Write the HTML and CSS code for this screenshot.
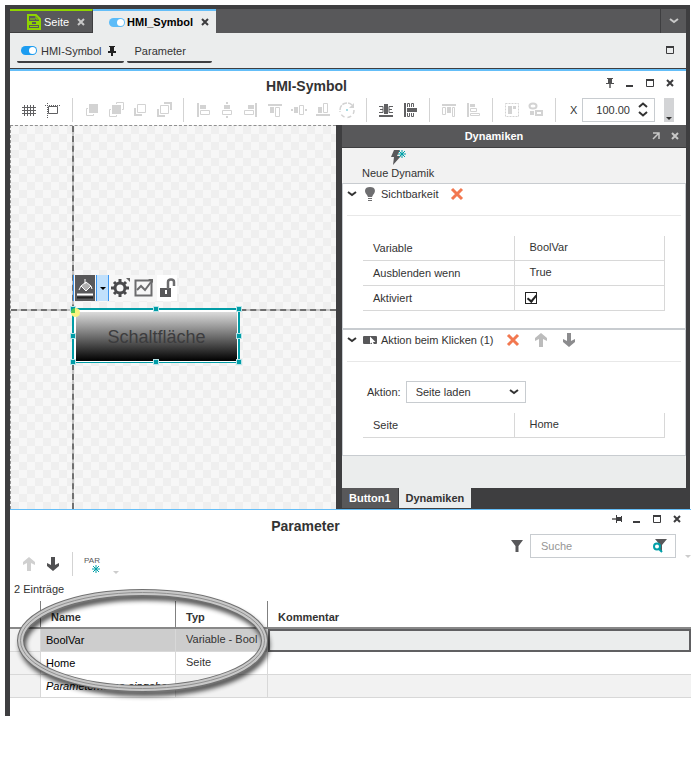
FILE: index.html
```html
<!DOCTYPE html>
<html lang="de">
<head>
	<meta charset="UTF-8"/>
	<title>HMI-Symbol</title>
	<link rel="stylesheet" href="styles.css">
</head>
<body>
<div class="app">
	<div class="workspace">
		<div class="tabs">
			<div class="tab page">
				<svg width="14" height="16" viewBox="0 0 14 16"><path d="M1 1h8l4 4v10H1z" fill="#58585a" stroke="#8fd400" stroke-width="2"/><path d="M9 1v4h4M3 5h5M3 12.5h8" fill="none" stroke="#8fd400"/><path d="M2 7h10v4H2z" fill="#8fd400"/><path d="M5 8h4v2H5z" fill="#58585a"/></svg>
				<span>Seite</span>
				<button class="x" aria-label="Schließen"><svg width="8" height="8"><path d="M1 1l6 6M7 1L1 7"/></svg></button>
			</div>
			<div class="tab active">
				<svg width="16" height="9"><rect width="16" height="9" rx="4.5" fill="#5cbcf8"/><circle cx="11.5" cy="4.5" r="3.5" fill="#fff"/></svg>
				<span>HMI_Symbol</span>
				<button class="x" aria-label="Schließen"><svg width="8" height="8"><path d="M1 1l6 6M7 1L1 7"/></svg></button>
			</div>
			<button class="more" aria-label="Alle Register"><svg width="10" height="6"><path d="M1 1l4 3 4-3" fill="none" stroke="#c8c8c8" stroke-width="2"/></svg></button>
		</div>
		<div class="subtabs">
			<div class="subtab first">
				<svg width="16" height="9"><rect width="16" height="9" rx="4.5" fill="#1c9cf0"/><circle cx="11.5" cy="4.5" r="3.5" fill="#fff"/></svg>
				<span>HMI-Symbol</span>
				<svg class="pin" width="8" height="10"><path d="M1 0h6v1H6v4h2v2H0V5h2V1H1z" fill="#222"/><path d="M4 7v3" stroke="#222" stroke-width="2"/></svg>
			</div>
			<div class="subtab">Parameter</div>
			<button class="max" aria-label="Maximieren"><svg width="8" height="8"><path d="M.5 1v6.5h7V1" fill="none" stroke="#3c3c3e"/><path d="M0 1h8" stroke="#3c3c3e" stroke-width="2"/></svg></button>
		</div>

		<div class="editor">
			<div class="titlebar">
				<h1>HMI-Symbol</h1>
				<div class="winctl">
					<button aria-label="Anheften"><svg width="8" height="10"><path d="M1 0h6v1H6v4h2v1H0V5h2V1H1z" fill="#505052"/><path d="M4 6v4" stroke="#808080" stroke-width="2"/></svg></button>
					<button aria-label="Minimieren"><svg width="8" height="8"><path d="M0 7h7" stroke="#3c3c3e" stroke-width="2"/></svg></button>
					<button aria-label="Maximieren"><svg width="8" height="8"><path d="M.5 1v6.5h7V1" fill="none" stroke="#3c3c3e"/><path d="M0 1h8" stroke="#3c3c3e" stroke-width="2"/></svg></button>
					<button class="x" aria-label="Schließen"><svg width="8" height="8"><path d="M1 1l6 6M7 1L1 7"/></svg></button>
				</div>
			</div>
			<div class="toolbar">
				<button class="tool dark" aria-label="Raster"><svg viewBox="0 0 16 16"><path class="l" d="M3.5 3v11M6.5 3v11M9.5 3v11M12.5 3v11M1 5.5h14M1 8.5h14M1 11.5h14"/></svg></button>
				<button class="tool dark" aria-label="Fangen"><svg viewBox="0 0 16 16"><path class="l" d="M3.5 4.5h9v7h-9z"/><path class="l" d="M0 3.5h16M2.5 1v16" stroke-dasharray="1 1"/></svg></button>
				<span class="sep"></span>
				<button class="tool" aria-label="Eine Ebene vor"><svg viewBox="0 0 16 16"><path class="f" d="M5 2h9v9H5z"/><path class="l" d="M4 6.5H2.5v7h7V12"/></svg></button>
				<button class="tool" aria-label="Nach vorn"><svg viewBox="0 0 16 16"><path class="f" d="M4 3h9v9H4z"/><path class="l" d="M3 7.5H1.5v7h7V13M8.5 2V.5h7v7H14"/></svg></button>
				<button class="tool" aria-label="Eine Ebene zurück"><svg viewBox="0 0 16 16"><path class="l" d="M5.5 2.5h8v8h-8z"/><path class="f" d="M2 6h2v6h6v2H2z"/></svg></button>
				<button class="tool" aria-label="Nach hinten"><svg viewBox="0 0 16 16"><path class="l" d="M4.5 3.5h8v8h-8z"/><path class="f" d="M1 7h2v6h6v2H1zM8 0h8v8h-2V2H8z"/></svg></button>
				<span class="sep"></span>
				<button class="tool" aria-label="Links ausrichten"><svg viewBox="0 0 16 16"><path class="f" d="M2 1h2v14H2zM5 3h6v4H5z"/><path class="l" d="M5.5 8.5h9v4h-9z"/></svg></button>
				<button class="tool" aria-label="Horizontal zentrieren"><svg viewBox="0 0 16 16"><path class="f" d="M5 3h6v4H5zM7 0h2v2H7zM7 14h2v2H7z"/><path class="l" d="M3.5 8.5h9v4h-9z"/></svg></button>
				<button class="tool" aria-label="Rechts ausrichten"><svg viewBox="0 0 16 16"><path class="f" d="M12 1h2v14h-2zM5 3h6v4H5z"/><path class="l" d="M1.5 8.5h9v4h-9z"/></svg></button>
				<button class="tool" aria-label="Oben ausrichten"><svg viewBox="0 0 16 16"><path class="f" d="M1 2h14v2H1zM3 5h4v6H3z"/><path class="l" d="M8.5 5.5h4v9h-4z"/></svg></button>
				<button class="tool" aria-label="Vertikal zentrieren"><svg viewBox="0 0 16 16"><path class="f" d="M3 5h4v6H3zM0 7h2v2H0zM14 7h2v2h-2z"/><path class="l" d="M8.5 3.5h4v9h-4z"/></svg></button>
				<button class="tool" aria-label="Unten ausrichten"><svg viewBox="0 0 16 16"><path class="f" d="M1 12h14v2H1zM3 5h4v6H3z"/><path class="l" d="M8.5 1.5h4v9h-4z"/></svg></button>
				<button class="tool" aria-label="Drehen"><svg viewBox="0 0 16 16"><path class="l" d="M1 8a7 7 0 0 1 12-5" stroke-width="1.5" stroke-dasharray="5 1"/><path class="l" d="M15 8A7 7 0 0 1 1 9" stroke-width="1.5" stroke-dasharray="4 3"/><path class="f" d="M15 1v5h-5z"/><path d="M7 7h2v2H7z" fill="#a8dce4"/></svg></button>
				<span class="sep"></span>
				<button class="tool dark" aria-label="Horizontal verteilen"><svg viewBox="0 0 16 16"><path class="f" d="M1 13h14v2H1zM6 2h4v10H6z"/><path class="l" d="M1 4.5h4v6H1M2 7.500h3M15 4.500h-4v6h4M11 7.500h3"/></svg></button>
				<button class="tool dark" aria-label="Vertikal verteilen"><svg viewBox="0 0 16 16"><path class="f" d="M2 1h2v14H2zM5 6h10v4H5z"/><path class="l" d="M5.5 5V1.500h2V5M9.500 5V1.500h2V5M5.500 11v3.500h2V11M9.500 11v3.500h2V11"/></svg></button>
				<span class="sep"></span>
				<button class="tool" aria-label="Gleiche Höhe"><svg viewBox="0 0 16 16"><path class="f" d="M1 2h14v2H1zM6 5h4v6H6z"/><path class="l" d="M1.5 5.5h3v7h-3zM11.5 5.5h2v9h-2z"/></svg></button>
				<button class="tool" aria-label="Gleiche Breite"><svg viewBox="0 0 16 16"><path class="f" d="M2 1h2v14H2zM5 2h5v3H5z"/><path class="l" d="M5.5 6.5h6v3h-6zM5.5 11.5h9v2h-9z"/></svg></button>
				<span class="sep"></span>
				<button class="tool" aria-label="Gruppieren"><svg viewBox="0 0 16 16"><path class="l" d="M1.5 1.5h13v13h-13z" stroke-dasharray="2 1"/><path class="f" d="M4 4h4v8H4zM9 4h3v3H9z"/></svg></button>
				<button class="tool" aria-label="Gruppierung aufheben"><svg viewBox="0 0 16 16"><ellipse class="l" cx="5" cy="4" rx="3.5" ry="2.5" stroke-width="2"/><path class="l" d="M8 9h6v4H8z" stroke-width="2"/><path class="f" d="M2 9h4v4H2z"/></svg></button>
				<span class="sep"></span>
				<label for="posx">X</label>
				<span class="spin">
					<input id="posx" type="text" value="100.00">
					<svg width="10" height="16"><path d="M1 5l4-3.5L9 5M1 10l4 3.5L9 10" fill="none" stroke="#333" stroke-width="2"/></svg>
				</span>
				<button class="overflow" aria-label="Weitere Werkzeuge"><svg width="6" height="3"><path d="M0 0h6L3 3z" fill="#333"/></svg></button>
			</div>

			<div class="stage">
				<div class="canvas">
					<span class="guide v"></span>
					<span class="guide h"></span>
					<div class="quick">
						<button class="fill" aria-label="Füllfarbe"><svg width="20" height="26"><path d="M6 11l5-4 5 4-5 5z" fill="#b0b0b0" stroke="#fff"/><path d="M10 4v5M6 11l-2 4M16 11l1 3" stroke="#fff"/><path d="M2 19.5h16" stroke="#fff" stroke-width="2"/><path d="M2 22.5h16" stroke="#222" stroke-width="2"/></svg></button>
						<button class="drop" aria-label="Farbe wählen"><svg width="6" height="3"><path d="M0 0h6L3 3z" fill="#000"/></svg></button>
						<button class="gear" aria-label="Eigenschaften"><svg width="20" height="20"><g stroke="#4a4a4c" fill="none"><circle cx="9" cy="10" r="5" stroke-width="3"/><path d="M9 1v3M9 16v3M0 10h3M15 10h3M3 4l2 2M13 14l2 2M15 4l-2 2M5 14l-2 2" stroke-width="3"/></g><path d="M15 0h4v4z" fill="#666"/></svg></button>
						<button class="trend" aria-label="Dynamik"><svg width="20" height="18"><path d="M1.5 1.5h16v15h-16z" fill="none" stroke="#6c6c6e" stroke-width="2"/><path d="M3 11l4-4 4 4 6-8" fill="none" stroke="#6c6c6e" stroke-width="2"/><path d="M14 0h5v4z" fill="#666"/></svg></button>
						<button class="lock" aria-label="Sperren"><svg width="20" height="20"><path d="M3 10h11v9H3z" fill="#58585a"/><path d="M11 11V4q0-2.500 3-2.500T17 4v4" fill="none" stroke="#6c6c6e" stroke-width="2.500"/><path d="M8 12h2v4H8z" fill="#fff"/></svg></button>
					</div>
					<div class="selected">
						<button class="hmi-button">Schaltfläche</button>
						<i class="hd tl"></i><i class="hd tc"></i><i class="hd tr"></i>
						<i class="hd ml"></i><i class="hd mr"></i>
						<i class="hd bl"></i><i class="hd bc"></i><i class="hd br"></i>
						<i class="origin"></i>
					</div>
				</div>

				<div class="panel">
					<div class="panel-head">
						<h2>Dynamiken</h2>
						<button aria-label="Ablösen"><svg width="8" height="8"><path d="M1 1h6v6M7 1L1 7" fill="none" stroke="#c8c8c8" stroke-width="1.500"/></svg></button>
						<button class="x" aria-label="Schließen"><svg width="8" height="8"><path d="M1 1l6 6M7 1L1 7"/></svg></button>
					</div>
					<div class="panel-tools">
						<button class="newdyn"><svg width="18" height="17"><path d="M5 1h6L8 7h4L4 16l1-8H2z" fill="#58585a"/><path d="M13 1v8M9 5h8M10 2l6 6M16 2l-6 6" stroke="#00a0a8"/></svg>Neue Dynamik</button>
					</div>
					<div class="dyn">
						<div class="dyn-head">
							<svg class="chev" width="10" height="6"><path d="M1 1l4 3 4-3"/></svg>
							<svg class="kind" width="14" height="16"><path d="M7 1c6 0 6 5 3 8l-1 2H5L4 9C1 6 1 1 7 1z" fill="#6e6e70"/><path d="M5 12.5h4M5 14.5h4" stroke="#6e6e70"/></svg>
							<span>Sichtbarkeit</span>
							<button class="del" aria-label="Löschen"><svg width="14" height="14"><path d="M2 2l10 10M12 2L2 12"/></svg></button>
						</div>
						<table class="props">
							<tr><td>Variable</td><td>BoolVar</td></tr>
							<tr><td>Ausblenden wenn</td><td>True</td></tr>
							<tr><td><label for="akt">Aktiviert</label></td><td class="chk"><input type="checkbox" id="akt" checked></td></tr>
						</table>
					</div>
					<div class="dyn next">
						<div class="dyn-head">
							<svg class="chev" width="10" height="6"><path d="M1 1l4 3 4-3"/></svg>
							<svg class="kind" width="14" height="16"><rect y="4" width="14" height="8" rx="1" fill="#58585a"/><path d="M7 4.500l5.500 5.500H10l1 2.500-1.500.5-1-2.500L7 12z" fill="#fff"/></svg>
							<span>Aktion beim Klicken (1)</span>
							<button class="del" aria-label="Löschen"><svg width="14" height="14"><path d="M2 2l10 10M12 2L2 12"/></svg></button>
							<button class="mv" aria-label="Nach oben"><svg width="14" height="14"><path d="M7 0l6 5v3L9 6v8H5V6L1 8V5z" fill="#bcbcbc"/></svg></button>
							<button class="mv" aria-label="Nach unten"><svg width="14" height="14"><path d="M7 14l6-5V6L9 8V0H5v8L1 6v3z" fill="#8c8c8e"/></svg></button>
						</div>
						<div class="action">
							<label for="action">Aktion:</label>
							<span class="pick"><select id="action"><option>Seite laden</option></select><svg class="chev" width="10" height="6"><path d="M1 1l4 3 4-3"/></svg></span>
						</div>
						<table class="props">
							<tr><td>Seite</td><td>Home</td></tr>
						</table>
					</div>
					<div class="panel-rest"></div>
					<div class="panel-tabs">
						<button>Button1</button>
						<button class="on">Dynamiken</button>
					</div>
				</div>
			</div>
		</div>
	</div>

	<div class="params">
		<div class="titlebar">
			<h1>Parameter</h1>
			<div class="winctl">
				<button aria-label="Anheften"><svg width="10" height="8"><path d="M10 1v6H9V6H5v2H4V0h1v2h4V1z" fill="#3c3c3e"/><path d="M0 4h4" stroke="#808080" stroke-width="2"/></svg></button>
				<button aria-label="Minimieren"><svg width="8" height="8"><path d="M0 7h7" stroke="#3c3c3e" stroke-width="2"/></svg></button>
				<button aria-label="Maximieren"><svg width="8" height="8"><path d="M.5 1v6.5h7V1" fill="none" stroke="#3c3c3e"/><path d="M0 1h8" stroke="#3c3c3e" stroke-width="2"/></svg></button>
				<button class="x" aria-label="Schließen"><svg width="8" height="8"><path d="M1 1l6 6M7 1L1 7"/></svg></button>
			</div>
		</div>
		<div class="param-tools">
			<div class="left">
				<button class="tool" aria-label="Nach oben"><svg width="14" height="14" viewBox="0 0 14 14"><path d="M7 0l6 5v3L9 6v8H5V6L1 8V5z" fill="#d0d0d0"/></svg></button>
				<button class="tool" aria-label="Nach unten"><svg width="14" height="14" viewBox="0 0 14 14"><path d="M7 14l6-5V6L9 8V0H5v8L1 6v3z" fill="#505052"/></svg></button>
				<span class="sep"></span>
				<button class="par">PAR<svg width="8" height="8"><path d="M4 0v8M0 4h8M1 1l6 6M7 1L1 7" stroke="#00a0a8"/></svg></button>
				<svg class="tri" width="6" height="3"><path d="M0 0h6L3 3z" fill="#ccc"/></svg>
			</div>
			<div class="right">
				<svg width="12" height="12"><path d="M0 0h12L7.500 6v6h-3V6z" fill="#58585a"/></svg>
				<span class="search">
					<input type="text" placeholder="Suche" aria-label="Suche">
					<svg width="15" height="14"><path d="M3 0h12l-5 6v6H8V6z" fill="#58585a"/><circle cx="5" cy="7.5" r="3" fill="#fff" stroke="#00a0a8" stroke-width="2"/><path d="M7 10l3 3" stroke="#00a0a8" stroke-width="2"/></svg>
				</span>
				<svg class="tri" width="6" height="3"><path d="M0 0h6L3 3z" fill="#ccc"/></svg>
			</div>
		</div>
		<p class="count">2 Einträge</p>
		<div class="grid">
			<table>
				<colgroup><col class="c0"><col class="c1"><col class="c2"><col></colgroup>
				<thead>
					<tr><th></th><th>Name</th><th>Typ</th><th>Kommentar</th></tr>
				</thead>
				<tbody>
					<tr class="sel"><td></td><td>BoolVar</td><td>Variable - Bool</td><td></td></tr>
					<tr><td></td><td>Home</td><td>Seite</td><td></td></tr>
					<tr class="new"><td></td><td>Parametername eingeben</td><td></td><td></td></tr>
				</tbody>
			</table>
			<!-- Markierung um Name/Typ -->
			<svg class="ring" width="276" height="116" viewBox="0 0 276 116">
				<defs><filter id="soft" x="-10%" y="-20%" width="120%" height="140%"><feGaussianBlur stdDeviation="2.5"/></filter></defs>
				<g fill="none">
					<ellipse cx="134.5" cy="56" rx="122" ry="48" stroke="#000" stroke-width="6" opacity=".75" filter="url(#soft)"/>
					<ellipse cx="132.5" cy="51.5" rx="122" ry="48" stroke="#707070" stroke-width="7"/>
					<ellipse cx="132.5" cy="51.5" rx="122" ry="48" stroke="#c8c8c8" stroke-width="5"/>
					<ellipse cx="132.5" cy="51.5" rx="122" ry="48" stroke="#909090" stroke-width="1"/>
				</g>
			</svg>
		</div>
	</div>
</div>
</body>
</html>
```

FILE: styles.css
```css
* { margin: 0; padding: 0; box-sizing: border-box; }
body {
	background-color: #fff;
	color: #333;
	font: 11px/16px "Liberation Sans", Arial, sans-serif;
}
button {
	display: flex;
	align-items: center;
	justify-content: center;
	border: none;
	background: none;
	color: inherit;
	font: inherit;
}
svg { display: block; flex: none; }
input, select { font: inherit; color: inherit; }
h1 { font-size: 14px; line-height: 16px; }
h2 { font-size: 11px; line-height: 16px; }

.app {
	margin: 5px 3px 0 5px;
	border-left: 5px solid #3e3e40;
}
.workspace {
	margin-right: 1px;
	padding: 4px 4px 0 0;
	background-color: #3e3e40;
}

/* Register */
.tabs {
	display: flex;
	height: 24px;
	background-color: #58585a;
}
.tab {
	display: flex;
	align-items: center;
	border-top: 2px solid;
}
.tab.page {
	gap: 3px;
	padding: 0 7px 0 17px;
	border-top-color: #8fd400;
	border-right: 1px solid #3e3e40;
	border-bottom: 1px solid #3e3e40;
	color: #fff;
}
.tab.page .x { margin-left: 5px; }
.tab.active {
	gap: 2px;
	padding: 0 7px 0 16px;
	border-top-color: #64bef8;
	background-color: #ebeded;
	color: #000;
	font-weight: bold;
}
.tab.active .x { margin-left: 6px; }
.x path { stroke: #3c3c3e; stroke-width: 2; }
.tab.page .x path, .panel-head .x path { stroke: #c8c8c8; }
.tabs .more {
	width: 26px;
	margin-left: auto;
	border-left: 1px solid #3e3e40;
}
.subtabs {
	display: flex;
	height: 36px;
	gap: 3px;
	padding: 7px 12px 0 7px;
	background-color: #ebeded;
	border-bottom: 1px solid #3e3e40;
}
.subtab {
	display: flex;
	align-items: center;
	height: 23px;
	padding: 0 26px 0 8px;
	border-bottom: 2px solid #3e3e40;
	border-radius: 2px;
}
.subtab.first { gap: 4px; padding: 0 8px 0 4px; }
.subtab .pin { margin-left: 2px; }
.max { height: 20px; margin-left: auto; }

/* Titel und Werkzeuge */
.editor { border-top: 2px solid #64bef8; }
.titlebar {
	display: flex;
	background-color: #fff;
}
.titlebar h1 {
	flex: 1;
	padding-top: 8px;
	text-align: center;
}
.winctl { display: flex; }
.winctl button { width: 20px; height: 24px; }
.editor .titlebar { height: 27px; padding: 0 6px 0 3px; }
.editor .titlebar h1 { padding-top: 7px; }
.toolbar {
	display: flex;
	padding: 0 12px 3px 7px;
	background-color: #fff;
}
.tool { width: 24px; height: 24px; }
.toolbar .tool svg { width: 16px; height: 16px; overflow: visible; }
.f { fill: #d3d3d3; }
.l { fill: none; stroke: #d3d3d3; }
.dark .f { fill: #606062; }
.dark .l { stroke: #606062; }
.sep {
	width: 1px;
	height: 24px;
	margin: 0 7px;
	background-color: #d3d3d3;
}
.toolbar label { width: 19px; padding-left: 7px; line-height: 24px; }
.spin {
	display: flex;
	align-items: center;
	width: 73px;
	height: 24px;
	padding-right: 6px;
	border: 1px solid #c8ccd0;
}
.spin input {
	width: 100%;
	min-width: 0;
	padding-right: 8px;
	border: none;
	background: none;
	text-align: right;
}
.overflow {
	width: 10px;
	height: 24px;
	margin-left: auto;
	padding-bottom: 2px;
	align-items: flex-end;
	background-color: #d3d4d6;
}

/* Zeichenfläche */
.stage { display: flex; }
.canvas {
	position: relative;
	flex: 1;
	border-top: 1px dashed #909090;
	border-left: 1px dashed #909090;
	background: repeating-conic-gradient(#efefef 0 25%, #f7f7f7 0 50%) 0 0 / 16px 16px;
}
.guide { position: absolute; background-color: #c4c4c4; }
.guide.v { top: 0; bottom: 0; left: 61px; border-left: 2px dashed #707070; }
.guide.h { left: 0; right: 0; top: 183px; border-top: 2px dashed #707070; }
.quick {
	position: absolute;
	top: 149px;
	left: 62px;
	display: flex;
	height: 26px;
	border-left: 1px solid #3c96f0;
	padding-left: 1px;
	background-color: #f7f7f7;
}
.quick .fill { width: 20px; background-color: #58585a; }
.quick .drop {
	width: 13px;
	margin-left: 1px;
	border: solid #3c96f0;
	border-width: 0 1px;
	background-color: #c0e0fc;
}
.quick .gear, .quick .trend { width: 23px; }
.quick .lock { width: 20px; margin-left: 2px; background-color: #fff; }
.selected {
	position: absolute;
	top: 182px;
	left: 61px;
	width: 168px;
	height: 55px;
	padding: 2px 1px 1px 2px;
	border: 2px solid #009ca6;
	border-width: 2px 2px 1px 2px;
	background-color: #fff;
}
.hmi-button {
	width: 100%;
	height: 100%;
	background: linear-gradient(#dcdcdc, #000);
	color: #3c3c3e;
	font-size: 18px;
}
.hd {
	position: absolute;
	width: 6px;
	height: 6px;
	border: 1px solid #b8e4e8;
	background-color: #009ca6;
}
.tl, .tc, .tr { top: -4px; }
.bl, .bc, .br { bottom: -3px; }
.ml, .mr { top: 23px; }
.tl, .ml, .bl { left: -4px; }
.tr, .mr, .br { right: -4px; }
.tc, .bc { left: 79px; }
.origin {
	position: absolute;
	top: -2px;
	left: -3px;
	width: 9px;
	height: 9px;
	border-radius: 50%;
	background: conic-gradient(#f8f480 75%, #50c850 0);
}

/* Dynamiken */
.panel {
	display: flex;
	flex-direction: column;
	width: 344px;
	margin-left: 6px;
	background-color: #ebeded;
}
.panel-head {
	display: flex;
	align-items: center;
	height: 23px;
	padding-right: 2px;
	border-bottom: 1px solid #3e3e40;
	background-color: #58585a;
	color: #fff;
}
.panel-head h2 { flex: 1; text-align: center; }
.panel-head button { width: 19px; height: 22px; }
.panel-tools {
	display: flex;
	align-items: flex-start;
	height: 36px;
	padding: 0 20px;
	border-bottom: 1px solid #c8ccd0;
	background-color: #f2f2f2;
}
.newdyn { flex-direction: column; }
.newdyn svg { margin: 1px 0 -1px; }
.dyn {
	padding-bottom: 17px;
	border: solid #c8ccd0;
	border-width: 0 1px;
	background-color: #fff;
}
.dyn.next { border-width: 2px 1px 1px; }
.dyn-head {
	display: flex;
	align-items: center;
	height: 32px;
	margin: 0 4px;
	padding-bottom: 11px;
	border-bottom: 1px solid #e8e8e8;
}
.chev { fill: none; stroke: #333; stroke-width: 2; }
.kind { margin: 0 4px 0 6px; }
.del { width: 14px; height: 14px; margin-left: 12px; }
.del path { stroke: #f27850; stroke-width: 3; }
.mv { width: 14px; height: 14px; margin-left: 14px; }
.props {
	width: 302px;
	max-width: 100%;
	margin: 20px 20px 0;
	border-right: 1px solid #d8d8d8;
	border-spacing: 0;
	table-layout: fixed;
}
.props td {
	height: 25px;
	padding-left: 10px;
	border-bottom: 1px solid #d8d8d8;
}
.props td + td {
	padding: 0 0 2px 15px;
	border-left: 1px solid #d8d8d8;
}
.props td.chk { padding: 0 0 0 10px; }
.chk input {
	display: block;
	width: 12px;
	height: 12px;
	appearance: none;
	border: 1px solid #222;
	background: #fff;
}
.chk input:checked::before {
	content: "";
	display: block;
	width: 4px;
	height: 7px;
	margin: 0 0 0 3px;
	border: solid #222;
	border-width: 0 2px 2px 0;
	transform: rotate(40deg);
}
.action {
	display: flex;
	align-items: center;
	gap: 5px;
	padding: 19px 24px 0;
}
.action + .props { margin-top: 10px; }
.pick {
	display: flex;
	align-items: center;
	width: 120px;
	height: 22px;
	padding-right: 6px;
	border: 1px solid #c8ccd0;
}
.pick select {
	flex: 1;
	padding-left: 9px;
	appearance: none;
	border: none;
	background: none;
}
.panel-rest { height: 32px; }
.panel-tabs {
	display: flex;
	height: 21px;
	border-bottom: 1px solid #3e3e40;
	background-color: #3e3e40;
}
.panel-tabs button {
	padding: 0 7px;
	margin-right: 1px;
	background-color: #58585a;
	color: #fff;
	font-weight: bold;
}
.panel-tabs .on { background-color: #ebeded; color: #333; }

/* Parameter */
.params {
	padding-bottom: 18px;
	border-top: 1px solid #64bef8;
	background-color: #fff;
}
.params .titlebar { padding-right: 4px; }
.params h1 { padding-right: 6px; }
.params .winctl button { height: 18px; }
.param-tools {
	display: flex;
	justify-content: space-between;
	height: 42px;
}
.left {
	display: flex;
	height: 24px;
	margin-top: 18px;
	padding-left: 7px;
}
.par {
	position: relative;
	width: 24px;
	color: #58585a;
	align-items: flex-start;
	font-size: 8px;
	line-height: 18px;
}
.par svg { position: absolute; right: 4px; bottom: 3px; }
.tri { align-self: flex-end; }
.left .tri { margin: 0 0 2px 9px; }
.right {
	display: flex;
	align-items: center;
	height: 24px;
}
.search {
	display: flex;
	align-items: center;
	width: 146px;
	height: 24px;
	margin: 0 9px 0 7px;
	padding: 0 8px 0 10px;
	border: 1px solid #c8ccd0;
}
.search input {
	flex: 1;
	min-width: 0;
	border: none;
	background: none;
}
.search input::placeholder { color: #959595; }
.count { margin: 5px 4px 4px; }
.grid { position: relative; }
.grid table {
	width: 100%;
	border-spacing: 0;
	table-layout: fixed;
}
.c0 { width: 31px; }
.c1 { width: 135px; }
.c2 { width: 92px; }
.grid th {
	height: 28px;
	padding: 6px 0 0 10px;
	border-right: 1px solid #808080;
	border-bottom: 2px solid #888;
	text-align: left;
}
.grid td {
	height: 23px;
	padding-left: 10px;
	border-right: 1px solid #d8d8d8;
	border-bottom: 1px solid #d8d8d8;
	overflow: hidden;
	white-space: nowrap;
}
.grid th:last-child, .grid td:last-child { border-right: none; }
.grid td:nth-child(1) { background-color: #f2f2f2; }
.grid td:nth-child(2) { padding-left: 5px; color: #000; }
.grid td:nth-child(3) { padding-bottom: 2px; }
.sel td:nth-child(2), .sel td:nth-child(3) { background-color: #cdcdcd; }
.grid .sel td:last-child { border: 2px solid #606062; background-color: #ebeded; }
.new td { background-color: #f2f2f2; }
.new td:nth-child(2) { background-color: #fff; font-style: italic; }
.ring {
	position: absolute;
	top: -12px;
	left: 0;
	pointer-events: none;
}
```
